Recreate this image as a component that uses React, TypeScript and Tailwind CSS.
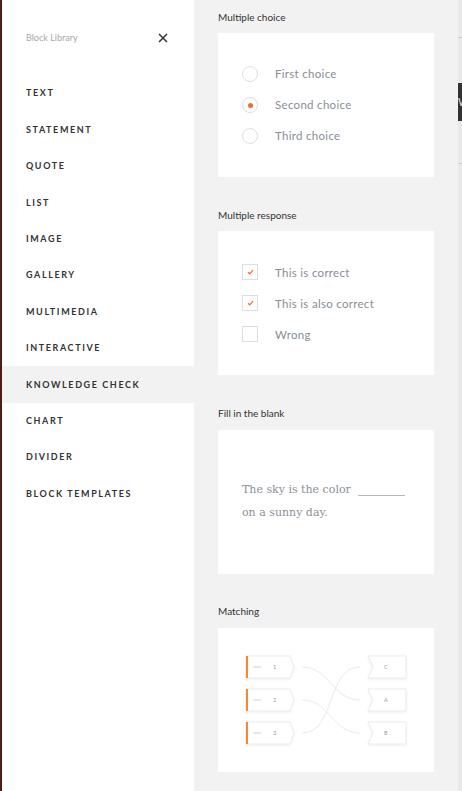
import { ReactNode } from 'react';

const menuItems = [
  'TEXT',
  'STATEMENT',
  'QUOTE',
  'LIST',
  'IMAGE',
  'GALLERY',
  'MULTIMEDIA',
  'INTERACTIVE',
  'KNOWLEDGE CHECK',
  'CHART',
  'DIVIDER',
  'BLOCK TEMPLATES',
];

const Section = ({ title, children }: { title: string; children: ReactNode }) => (
  <div className="flex flex-col">
    <div className="h-[33px] pt-[1px] flex items-center text-[10px] text-[#333]">{title}</div>
    <div className="w-[216px] h-[144px] bg-white">{children}</div>
  </div>
);

const Radio = ({ checked }: { checked?: boolean }) => (
  <span className="w-[16px] h-[16px] rounded-full border border-[#dedede] flex items-center justify-center">
    {checked && <span className="w-[5px] h-[5px] rounded-full bg-[#f26a34]" />}
  </span>
);

const Checkbox = ({ checked }: { checked?: boolean }) => (
  <span className="w-[16px] h-[16px] border border-[#dedede] flex items-center justify-center">
    {checked && (
      <svg width="7" height="6" viewBox="0 0 7 6">
        <path d="M1 3.2 L2.8 4.8 L6 1.2" fill="none" stroke="#f26a34" strokeWidth="1.2" />
      </svg>
    )}
  </span>
);

const OptionList = ({ items }: { items: { label: string; control: ReactNode }[] }) => (
  <div className="h-full flex flex-col justify-center pl-[24px]">
    {items.map((item) => (
      <div key={item.label} className="h-[31px] flex items-center">
        {item.control}
        <span className="ml-[17px] text-[11.5px] tracking-[0.3px] text-[#878d96]">{item.label}</span>
      </div>
    ))}
  </div>
);

const MatchingDiagram = () => {
  const rows = [28, 61, 94];
  const left = ['1', '2', '3'];
  const right = ['C', 'A', 'B'];
  return (
    <svg width="216" height="144" viewBox="0 0 216 144">
      <defs>
        <filter id="sh" x="-10%" y="-10%" width="120%" height="140%">
          <feDropShadow dx="0" dy="1" stdDeviation="0.8" floodColor="#000" floodOpacity="0.08" />
        </filter>
      </defs>
      {/* connector curves */}
      <g fill="none" stroke="#e4e4e4" strokeWidth="0.8">
        <path d="M84 39 C112 39 114 72 142 72" />
        <path d="M84 72 C112 72 114 105 142 105" />
        <path d="M84 105 C118 105 108 39 142 39" />
      </g>
      {rows.map((y, i) => (
        <g key={'l' + i}>
          <path
            d={`M28 ${y} L72 ${y} L76 ${y + 11} L72 ${y + 22} L28 ${y + 22} Z`}
            fill="#fff"
            stroke="#e6e6e6"
            strokeWidth="0.8"
            filter="url(#sh)"
          />
          <rect x="28" y={y} width="2" height="22" fill="#f7882f" />
          <line x1="35" y1={y + 11} x2="43" y2={y + 11} stroke="#e8e8e8" strokeWidth="2" />
          <text x="55" y={y + 13} fontSize="5.5" fill="#999" fontFamily="Lato, sans-serif">
            {left[i]}
          </text>
        </g>
      ))}
      {rows.map((y, i) => (
        <g key={'r' + i}>
          <path
            d={`M150 ${y} L188 ${y} L188 ${y + 22} L150 ${y + 22} L155 ${y + 11} Z`}
            fill="#fff"
            stroke="#e6e6e6"
            strokeWidth="0.8"
            filter="url(#sh)"
          />
          <text x="166" y={y + 13} fontSize="5.5" fill="#999" fontFamily="Lato, sans-serif">
            {right[i]}
          </text>
        </g>
      ))}
    </svg>
  );
};

export default function App() {
  return (
    <div className="w-[462px] h-[791px] flex overflow-hidden font-['Lato','Liberation_Sans',sans-serif]">
      <div className="w-[2px] shrink-0 bg-[#4f1d13]" />
      {/* Sidebar */}
      <div className="w-[192px] shrink-0 bg-white flex flex-col">
        <div className="h-[75px] flex items-center justify-between pl-[24px] pr-[26px]">
          <span className="text-[9px] text-[#a8a8a8]">Block Library</span>
          <svg width="10" height="10" viewBox="0 0 10 10">
            <path d="M1 1 L9 9 M9 1 L1 9" stroke="#333" strokeWidth="1.5" />
          </svg>
        </div>
        {menuItems.map((item) => (
          <div
            key={item}
            className={`h-[36.4px] flex items-center pl-[24px] text-[9px] font-bold tracking-[1.6px] text-[#333] ${
              item === 'KNOWLEDGE CHECK' ? 'bg-[#f2f2f2]' : ''
            }`}
          >
            {item}
          </div>
        ))}
      </div>

      {/* Preview panel */}
      <div className="w-[264px] shrink-0 bg-[#f2f2f2] pl-[24px] flex flex-col gap-[21.3px]">
        <Section title="Multiple choice">
          <OptionList
            items={[
              { label: 'First choice', control: <Radio /> },
              { label: 'Second choice', control: <Radio checked /> },
              { label: 'Third choice', control: <Radio /> },
            ]}
          />
        </Section>
        <Section title="Multiple response">
          <OptionList
            items={[
              { label: 'This is correct', control: <Checkbox checked /> },
              { label: 'This is also correct', control: <Checkbox checked /> },
              { label: 'Wrong', control: <Checkbox /> },
            ]}
          />
        </Section>
        <Section title="Fill in the blank">
          <div className="h-full flex flex-col justify-center pl-[24px] font-['DejaVu_Serif',serif] text-[11px] leading-[22.5px] text-[#8a8f98]">
            <div className="flex items-end">
              <span>The sky is the color</span>
              <span className="ml-[7px] mb-[6px] w-[47px] border-b border-[#b4b8be]" />
            </div>
            <div>on a sunny day.</div>
          </div>
        </Section>
        <Section title="Matching">
          <MatchingDiagram />
        </Section>
      </div>

      {/* Underlying page edge */}
      <div className="flex-1 min-w-0 bg-[#e9e9e9] flex flex-col">
        <div className="h-[38px] border-b border-[#cfcfcf]" />
        <div className="h-[45px]" />
        <div className="h-[38px] bg-[#333] text-[#ddd] text-[11px] flex items-center overflow-hidden">W</div>
        <div className="h-[43px] border-b border-[#cfcfcf]" />
      </div>
    </div>
  );
}
